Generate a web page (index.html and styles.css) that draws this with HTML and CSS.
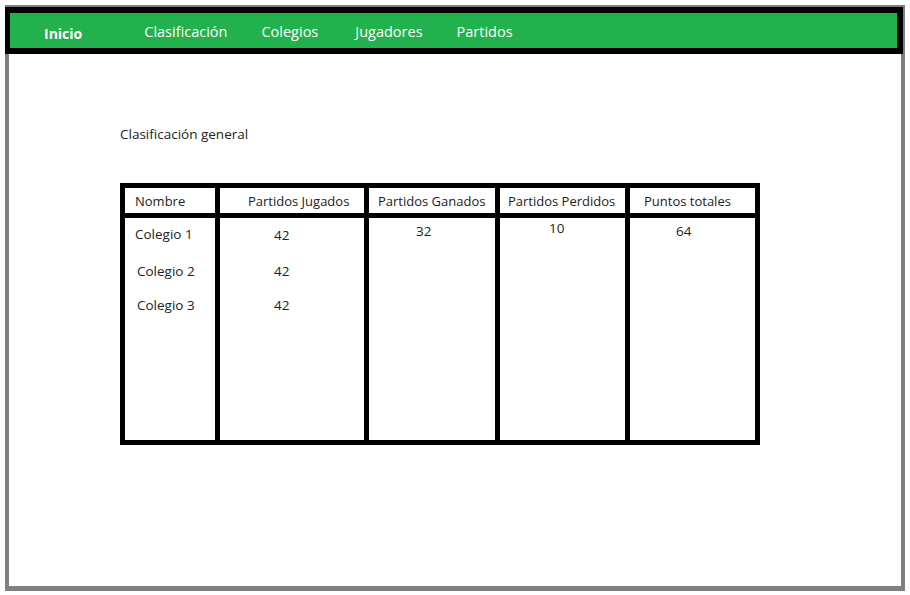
FILE: index.html
```html
<!DOCTYPE html>
<html lang="es">
<head>
<meta charset="utf-8">
<title>Clasificación</title>
<link rel="stylesheet" href="styles.css">
</head>
<body>
<div class="frame">
  <nav class="nav">
    <a class="nav-item home" href="#">Inicio</a>
    <a class="nav-item" href="#">Clasificación</a>
    <a class="nav-item" href="#">Colegios</a>
    <a class="nav-item wide" href="#">Jugadores</a>
    <a class="nav-item" href="#">Partidos</a>
  </nav>
  <main class="content">
    <h1 class="title">Clasificación general</h1>
    <table class="standings">
      <thead>
        <tr>
          <th class="c1">Nombre</th>
          <th class="c2">Partidos Jugados</th>
          <th class="c3">Partidos Ganados</th>
          <th class="c4">Partidos Perdidos</th>
          <th class="c5">Puntos totales</th>
        </tr>
      </thead>
      <tbody>
        <tr class="r1">
          <td class="c1">Colegio 1</td>
          <td class="c2 low">42</td>
          <td class="c3 hi">32</td>
          <td class="c4 hi2">10</td>
          <td class="c5 hi1">64</td>
        </tr>
        <tr class="r2">
          <td class="c1 shift">Colegio 2</td>
          <td class="c2">42</td>
          <td class="c3"></td>
          <td class="c4"></td>
          <td class="c5"></td>
        </tr>
        <tr class="r2">
          <td class="c1 shift">Colegio 3</td>
          <td class="c2">42</td>
          <td class="c3"></td>
          <td class="c4"></td>
          <td class="c5"></td>
        </tr>
        <tr class="filler">
          <td class="c1"></td>
          <td class="c2"></td>
          <td class="c3"></td>
          <td class="c4"></td>
          <td class="c5"></td>
        </tr>
      </tbody>
    </table>
  </main>
</div>
</body>
</html>
```
FILE: styles.css
```css
html, body {
  margin: 0;
  padding: 0;
  background: #ffffff;
}

body {
  font-family: "Open Sans", "Noto Sans", sans-serif;
  color: #222222;
}

.frame {
  margin: 5px 0 0 5px;
  width: 900px;
  height: 586px;
  box-sizing: border-box;
  border: 4px solid #808080;
  border-top-width: 2px;
  border-bottom-width: 5px;
  background: #ffffff;
}

.nav {
  margin: 0 -2px 0 -4px;
  height: 35px;
  background: #22b14c;
  border-style: solid;
  border-color: #000000;
  border-width: 6px 6px 6px 5px;
  display: flex;
  align-items: center;
  padding-left: 34px;
  gap: 34px;
}

.nav-item {
  color: #ffffff;
  text-decoration: none;
  font-size: 14.5px;
  line-height: 20px;
  margin-top: 2px;
}

.nav-item.home {
  font-size: 14px;
  font-weight: 700;
  margin-top: 6px;
  margin-right: 28px;
}

.nav-item.wide {
  margin-left: 3px;
}

.content {
  padding-left: 111px;
}

.title {
  margin: 70px 0 0;
  font-size: 13.5px;
  line-height: 20px;
  font-weight: 400;
  color: #222222;
}

.standings {
  margin-top: 39px;
  width: 640px;
  box-sizing: border-box;
  table-layout: fixed;
  border-collapse: separate;
  border-spacing: 0;
  border: 5px solid #000000;
  font-size: 13.5px;
}

.standings th,
.standings td {
  box-sizing: border-box;
  text-align: left;
  vertical-align: top;
  line-height: 18px;
  font-weight: 400;
  color: #222222;
  white-space: nowrap;
}

.standings th {
  font-size: 13px;
  padding-top: 4px;
  padding-bottom: 3px;
  border-bottom: 5px solid #000000;
}

.standings .c2,
.standings .c3,
.standings .c4,
.standings .c5 {
  border-left: 5px solid #000000;
}

th.c1 { width: 90px; padding-left: 10px; }
th.c2 { width: 149px; padding-left: 28px; }
th.c3 { width: 131px; padding-left: 9px; }
th.c4 { width: 130px; padding-left: 8px; }
th.c5 { width: 130px; padding-left: 14px; }

td.c1 { padding-left: 10px; }
td.c1.shift { padding-left: 12px; }
td.c2 { padding-left: 54px; }
td.c3 { padding-left: 47px; }
td.c4 { padding-left: 49px; }
td.c5 { padding-left: 46px; }

.r1 td {
  padding-top: 7px;
  padding-bottom: 11px;
}

.r1 td.low { padding-top: 8px; }
.r1 td.hi { padding-top: 4px; }
.r1 td.hi2 { padding-top: 1px; }
.r1 td.hi1 { padding-top: 4px; }

.r2 td {
  padding-top: 7px;
  padding-bottom: 9px;
}

.filler td {
  height: 117px;
  padding: 0;
}
```
